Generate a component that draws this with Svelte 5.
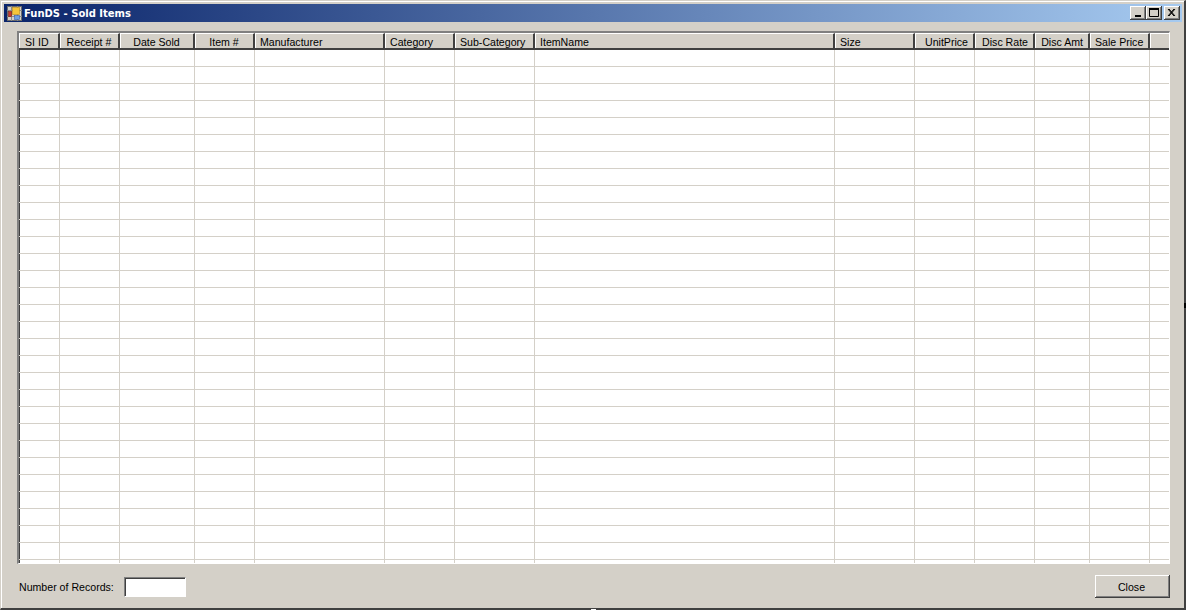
<script>
  const columns = [
    { label: 'SI ID', width: 41, align: 'first' },
    { label: 'Receipt #', width: 60, align: 'center' },
    { label: 'Date Sold', width: 75, align: 'center' },
    { label: 'Item #', width: 60, align: 'center' },
    { label: 'Manufacturer', width: 130, align: 'left' },
    { label: 'Category', width: 70, align: 'left' },
    { label: 'Sub-Category', width: 80, align: 'left' },
    { label: 'ItemName', width: 300, align: 'left' },
    { label: 'Size', width: 80, align: 'left' },
    { label: 'UnitPrice', width: 60, align: 'right' },
    { label: 'Disc Rate', width: 60, align: 'right' },
    { label: 'Disc Amt', width: 55, align: 'right' },
    { label: 'Sale Price', width: 60, align: 'right' }
  ];
  const rows = Array.from({ length: 31 }, (_, i) => i);
  const template = columns.map((c) => c.width + 'px').join(' ') + ' 20px';
</script>

<div class="window">
  <div class="titlebar">
    <svg class="appicon" width="15" height="15" viewBox="0 0 15 15">
      <rect x="0.5" y="0.5" width="14" height="14" fill="#d4d0c8" stroke="#6b6b6b" />
      <path d="M0 4.5H15M0 10.5H15M4.5 0V15M10.5 0V15" stroke="#8a8a8a" stroke-width="1" />
      <rect x="5.5" y="1.5" width="7" height="7" fill="#f5c53a" stroke="#b98a14" stroke-width="0.6" />
      <rect x="1.5" y="5.5" width="3" height="5" fill="#c8382c" stroke="#7a1f18" stroke-width="0.6" />
      <rect x="7.5" y="9.5" width="5" height="4" fill="#6f9fe0" stroke="#3b62a8" stroke-width="0.6" />
    </svg>
    <span class="title">FunDS - Sold Items</span>
    <div class="controls">
      <button class="ctl" aria-label="Minimize">
        <svg width="16" height="14" viewBox="0 0 16 14"><rect x="5" y="9" width="6" height="2" fill="#000" /></svg>
      </button>
      <button class="ctl" aria-label="Maximize">
        <svg width="16" height="14" viewBox="0 0 16 14"><path d="M3.5 3.5H12.5V10.5H3.5Z" fill="none" stroke="#000" /><rect x="3" y="2" width="10" height="2" fill="#000" /></svg>
      </button>
      <button class="ctl close" aria-label="Close window">
        <svg width="16" height="14" viewBox="0 0 16 14"><path d="M4 3L10 10M5 3L11 10M10 3L4 10M11 3L5 10" stroke="#000" stroke-width="1" fill="none" /></svg>
      </button>
    </div>
  </div>

  <div class="grid">
    <div class="head" style="grid-template-columns: {template}">
      {#each columns as col}
        <div class="hcell {col.align}">{col.label}</div>
      {/each}
      <div class="hcell filler"></div>
    </div>
    <div class="body">
      {#each rows as r}
        <div class="row" style="grid-template-columns: {template}">
          {#each columns as col}
            <div class="cell"></div>
          {/each}
          <div class="cell"></div>
        </div>
      {/each}
    </div>
  </div>

  <div class="footer">
    <div class="records">
      <span class="label">Number of Records:</span>
      <div class="input"></div>
    </div>
    <button class="closebtn">Close</button>
  </div>
  <span class="grip"></span>
  <span class="grip-right"></span>
</div>

<style>
  :global(body) {
    margin: 0;
    background: #d4d0c8;
  }
  .window {
    position: relative;
    box-sizing: border-box;
    width: 1186px;
    height: 610px;
    background: #d4d0c8;
    border-top: 1px solid #d4d0c8;
    border-left: 1px solid #d4d0c8;
    border-right: 2px solid #404040;
    border-bottom: 2px solid #404040;
    box-shadow: inset 1px 1px 0 #fff;
    padding: 3px 2px 0 3px;
    display: flex;
    flex-direction: column;
    font-family: "Liberation Sans", Arial, sans-serif;
    font-size: 10.6px;
    color: #000;
    overflow: visible;
  }
  .titlebar {
    height: 18px;
    flex: none;
    display: flex;
    align-items: center;
    background: linear-gradient(90deg, #0a246a, #a6caf0);
    padding: 0 2px 0 3px;
  }
  .appicon {
    flex: none;
    margin-right: 2px;
  }
  .title {
    font-family: "DejaVu Sans", Verdana, sans-serif;
    font-weight: 700;
    font-size: 10px;
    color: #fff;
    white-space: nowrap;
  }
  .controls {
    margin-left: auto;
    display: flex;
  }
  .ctl {
    box-sizing: border-box;
    width: 16px;
    height: 14px;
    padding: 0;
    border: none;
    background: #d4d0c8;
    box-shadow: inset -1px -1px 0 #404040, inset 1px 1px 0 #fff, inset -2px -2px 0 #808080;
    display: block;
  }
  .ctl svg {
    display: block;
  }
  .close {
    margin-left: 2px;
  }
  .grid {
    flex: none;
    box-sizing: border-box;
    width: 1153px;
    height: 533px;
    margin: 9px 0 0 13px;
    background: #fff;
    border-top: 2px solid #808080;
    border-left: 2px solid #808080;
    border-right: 1px solid #fff;
    border-bottom: 1px solid #fff;
    box-shadow: inset 1px 1px 0 #404040;
    overflow: hidden;
  }
  .head {
    display: grid;
    height: 17px;
    box-sizing: border-box;
  }
  .hcell {
    box-sizing: border-box;
    height: 17px;
    background: #d4d0c8;
    border-right: 2px solid #404040;
    border-bottom: 2px solid #404040;
    border-top: 1px solid #fff;
    line-height: 17px;
    padding: 0 5px;
    white-space: nowrap;
    overflow: hidden;
    box-shadow: inset 1px 0 0 #fff;
  }
  .hcell.first {
    padding-left: 6px;
    text-align: left;
  }
  .hcell.left {
    text-align: left;
  }
  .hcell.center {
    text-align: center;
  }
  .hcell.right {
    text-align: right;
  }
  .hcell.filler {
    border-right: none;
  }
  .row {
    display: grid;
    height: 17px;
  }
  .cell {
    box-sizing: border-box;
    height: 17px;
    border-right: 1px solid #d4d0c8;
    border-bottom: 1px solid #d4d0c8;
  }
  .footer {
    flex: 1;
    display: flex;
    align-items: flex-start;
    justify-content: space-between;
    padding: 11px 12px 0 15px;
  }
  .records {
    display: flex;
    align-items: center;
    margin-top: 2px;
  }
  .label {
    margin-right: 10px;
    white-space: nowrap;
  }
  .input {
    box-sizing: border-box;
    width: 62px;
    height: 20px;
    background: #fff;
    border-top: 1px solid #808080;
    border-left: 1px solid #808080;
    border-right: 1px solid #fff;
    border-bottom: 1px solid #fff;
    box-shadow: inset 1px 1px 0 #404040;
  }
  .closebtn {
    box-sizing: border-box;
    width: 75px;
    height: 23px;
    padding: 0 2px 0 0;
    border: none;
    background: #d4d0c8;
    font: inherit;
    color: #000;
    box-shadow: inset -1px -1px 0 #404040, inset 1px 1px 0 #fff, inset -2px -2px 0 #808080;
  }
  .grip {
    position: absolute;
    left: 590px;
    bottom: -2px;
    width: 5px;
    height: 1px;
    background: #fff;
  }
  .grip-right {
    position: absolute;
    right: -2px;
    top: 302px;
    width: 2px;
    height: 5px;
    background: #000;
  }
</style>
